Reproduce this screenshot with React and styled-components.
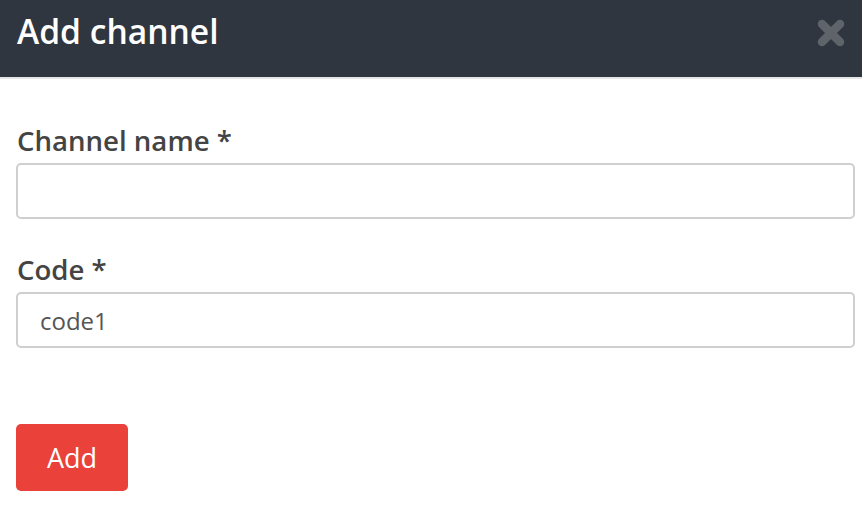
import * as React from "react";
import styled, { createGlobalStyle } from "styled-components";

const GlobalStyle = createGlobalStyle`
  html, body {
    margin: 0;
    padding: 0;
    background: #fff;
    font-family: "Open Sans", "Noto Sans", sans-serif;
  }
`;

const Modal = styled.div`
  width: 862px;
  display: flex;
  flex-direction: column;
`;

const Header = styled.div`
  height: 79px;
  display: flex;
  align-items: flex-start;
  justify-content: space-between;
  padding: 11px 17px 0 17px;
  background-color: #30363f;
  border-bottom: 2px solid #e6e6e6;
  box-sizing: border-box;
`;

const Title = styled.h1`
  margin: 0;
  font-size: 33.6px;
  line-height: 40px;
  font-weight: 600;
  color: #fff;
`;

const Close = styled.button`
  border: none;
  background: none;
  padding: 0;
  margin-top: 8px;
  display: flex;
  color: #5f636a;
  cursor: pointer;
`;

const Body = styled.form`
  display: flex;
  flex-direction: column;
  padding: 43px 7px 0 16px;
`;

const Field = styled.div`
  display: flex;
  flex-direction: column;
  margin-bottom: ${(p) => p.$gap || "0px"};
`;

const Label = styled.label`
  font-size: 27.6px;
  font-weight: 600;
  color: #444;
  margin: 0 0 5px 1px;
  line-height: 36px;
`;

const Input = styled.input`
  height: 56px;
  box-sizing: border-box;
  border: 2px solid #cfcfcf;
  border-radius: 5px;
  padding: 0 22px;
  font-family: inherit;
  font-size: 24px;
  color: #555;
  outline: none;
`;

const Button = styled.button`
  align-self: flex-start;
  width: 112px;
  height: 67px;
  border: none;
  border-radius: 5px;
  background-color: #ea413b;
  color: #fff;
  font-family: inherit;
  font-size: 27px;
  cursor: pointer;
`;

const CloseIcon = () => (
  <svg width="28" height="28" viewBox="0 0 28 28" aria-hidden="true">
    <path
      d="M5 5 L23 23 M23 5 L5 23"
      stroke="currentColor"
      strokeWidth="8.5"
      strokeLinecap="round"
      fill="none"
    />
  </svg>
);

export default function App() {
  return (
    <>
      <GlobalStyle />
      <Modal>
        <Header>
          <Title>Add channel</Title>
          <Close type="button" aria-label="Close">
            <CloseIcon />
          </Close>
        </Header>
        <Body onSubmit={(e) => e.preventDefault()}>
          <Field $gap="32px">
            <Label>Channel name *</Label>
            <Input type="text" />
          </Field>
          <Field $gap="76px">
            <Label>Code *</Label>
            <Input type="text" defaultValue="code1" />
          </Field>
          <Button type="submit">Add</Button>
        </Body>
      </Modal>
    </>
  );
}
